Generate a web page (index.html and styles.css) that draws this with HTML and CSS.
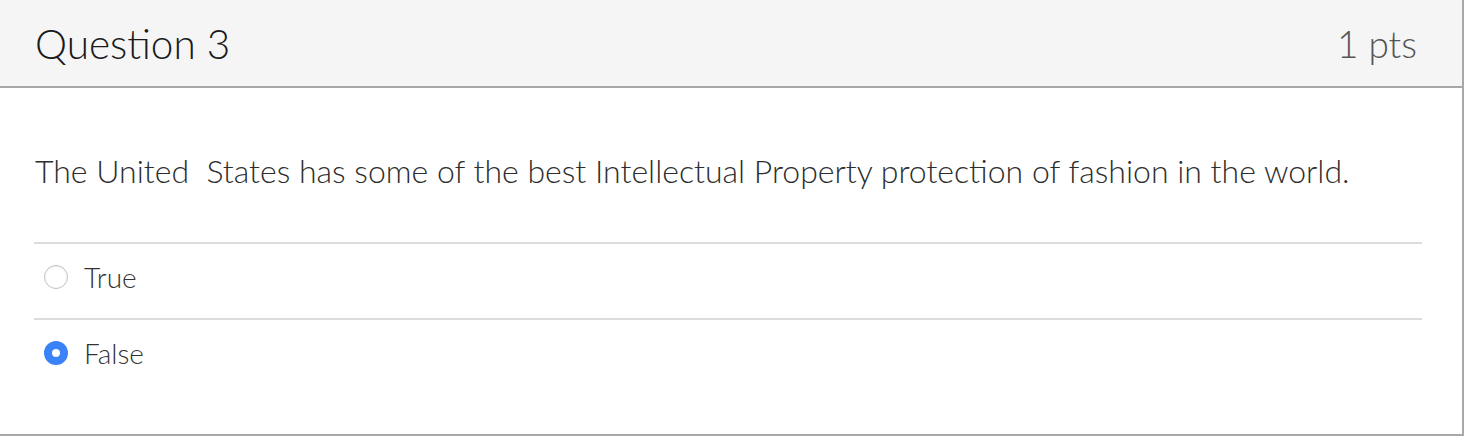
FILE: index.html
```html
<!DOCTYPE html>
<html>
<head>
<meta charset="utf-8">
<link rel="stylesheet" href="styles.css">
</head>
<body>
<div class="card">
  <div class="header">
    <div class="title">Question 3</div>
    <div class="pts">1 pts</div>
  </div>
  <div class="content">
    <div class="qtext">The United&nbsp; States has some of the best Intellectual Property protection of fashion in the world.</div>
    <div class="answers">
      <div class="answer">
        <span class="radio"></span>
        <span class="label">True</span>
      </div>
      <div class="answer">
        <span class="radio checked"></span>
        <span class="label">False</span>
      </div>
    </div>
  </div>
</div>
</body>
</html>
```
FILE: styles.css
```css
html, body {
  margin: 0;
  padding: 0;
  background: #fff;
}
body {
  font-family: "Lato Light", Lato, "Liberation Sans", sans-serif;
  font-weight: 300;
  color: #2d2d2d;
}
.card {
  width: 1462px;
  height: 434px;
  border-right: 2px solid #a8a8a8;
  border-bottom: 2px solid #a8a8a8;
}
.header {
  height: 86px;
  background: #f5f5f5;
  border-bottom: 2px solid #a8a8a8;
  display: flex;
  align-items: center;
  justify-content: space-between;
  padding: 0 45px 0 35px;
}
.title {
  font-size: 40.5px;
  color: #1a1a1a;
}
.pts {
  font-size: 37px;
  color: #555;
}
.content {
  padding: 0 40px 0 34px;
}
.qtext {
  font-size: 32px;
  color: #2d2d2d;
  padding: 64px 0 0 1px;
  height: 90px;
  line-height: 38px;
}
.answer {
  border-top: 2px solid #dddddd;
  height: 66px;
  padding-bottom: 8px;
  display: flex;
  align-items: center;
  padding-left: 10px;
}
.radio {
  width: 22px;
  height: 22px;
  border-radius: 50%;
  border: 1px solid #c0c0c0;
  background: #fff;
  box-shadow: inset 0 1px 2px rgba(0,0,0,0.06);
  flex: none;
}
.radio.checked {
  width: 8px;
  height: 8px;
  border: 8px solid #3a82f7;
  background: #fff;
  box-shadow: none;
}
.label {
  font-size: 28px;
  margin-left: 16px;
  color: #333;
}
```
